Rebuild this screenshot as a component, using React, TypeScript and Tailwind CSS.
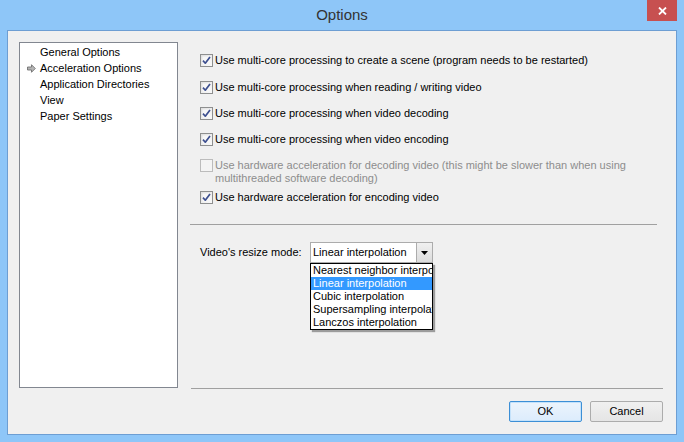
import React from "react";

const treeItems = [
  "General Options",
  "Acceleration Options",
  "Application Directories",
  "View",
  "Paper Settings",
];

const resizeModes = [
  "Nearest neighbor interpolation",
  "Linear interpolation",
  "Cubic interpolation",
  "Supersampling interpolation",
  "Lanczos interpolation",
];

function CheckBox({ checked, disabled }: { checked?: boolean; disabled?: boolean }) {
  return (
    <svg width="13" height="13" viewBox="0 0 13 13" className="shrink-0">
      <defs>
        <linearGradient id="cbg" x1="0" y1="0" x2="1" y2="1">
          <stop offset="0" stopColor="#dedede" />
          <stop offset="1" stopColor="#fbfbfb" />
        </linearGradient>
      </defs>
      <rect
        x="0.5"
        y="0.5"
        width="12"
        height="12"
        fill={disabled ? "#f4f4f4" : "url(#cbg)"}
        stroke={disabled ? "#bcbcbc" : "#8e8f8f"}
      />
      {!disabled && <rect x="2.5" y="2.5" width="8" height="8" fill="#f7f7f7" />}
      {checked && (
        <path
          d="M3 6.6 L5.3 9.2 L10 3"
          fill="none"
          stroke="#3d4f8f"
          strokeWidth="1.7"
          strokeLinejoin="round"
        />
      )}
    </svg>
  );
}

function Option({
  checked,
  disabled,
  className,
  children,
}: {
  checked?: boolean;
  disabled?: boolean;
  className?: string;
  children: React.ReactNode;
}) {
  return (
    <div className={`flex items-start gap-[2px] ${className ?? ""}`}>
      <CheckBox checked={checked} disabled={disabled} />
      <span className={`leading-[13px] ${disabled ? "text-[#8d8d8d]" : "text-black"}`}>
        {children}
      </span>
    </div>
  );
}

export default function App() {
  return (
    <div className="w-[684px] h-[442px] bg-[#8ec6f8] px-[7px] pb-[7px] flex flex-col font-['Liberation_Sans',Arial,sans-serif] text-[11px] select-none">
      {/* Title bar */}
      <div className="h-[30px] grid grid-cols-[1fr_auto_1fr] items-start">
        <div />
        <div className="pt-[6px] text-[15px] leading-[18px] text-[#333]">Options</div>
        <div className="justify-self-end w-[30px] h-[21px] bg-[#c75050] flex items-center justify-center">
          <svg width="9" height="8" viewBox="0 0 9 8">
            <path d="M1 0.5 L8 7.5 M8 0.5 L1 7.5" stroke="#fff" strokeWidth="1.8" />
          </svg>
        </div>
      </div>

      {/* Client area */}
      <div className="h-[405px] border border-[#6d9ed3] bg-[#f0f0f0] flex pt-[11px] pl-[11px] pr-[13px] pb-[12px]">
        {/* Tree */}
        <div className="w-[159px] h-[346px] shrink-0 bg-white border border-[#828790] pt-[1px]">
          {treeItems.map((item, i) => (
            <div key={item} className="h-[16px] flex items-center">
              <div className="w-[20px] flex justify-end pr-[4px]">
                {i === 1 && (
                  <svg width="9" height="9" viewBox="0 0 9 9">
                    <path
                      d="M0.5 3 H4.5 V0.7 L8.3 4.5 L4.5 8.3 V6 H0.5 Z"
                      fill="#b4b4b4"
                      stroke="#666"
                      strokeWidth="0.8"
                      strokeLinejoin="round"
                    />
                  </svg>
                )}
              </div>
              <span className="text-black">{item}</span>
            </div>
          ))}
        </div>

        {/* Settings */}
        <div className="ml-[13px] flex-1 flex flex-col">
          <div className="pl-[9px] pt-[12px] flex flex-col">
            <Option checked>Use multi-core processing to create a scene (program needs to be restarted)</Option>
            <Option checked className="mt-[14px]">Use multi-core processing when reading / writing video</Option>
            <Option checked className="mt-[13px]">Use multi-core processing when video decoding</Option>
            <Option checked className="mt-[13px]">Use multi-core processing when video encoding</Option>
            <Option disabled className="mt-[13px]">
              Use hardware acceleration for decoding video (this might be slower than when using
              <br />
              multithreaded software decoding)
            </Option>
            <Option checked className="mt-[6px]">Use hardware acceleration for encoding video</Option>
          </div>

          <div className="mt-[20px] -ml-px mr-[6px] h-px bg-[#a0a0a0]" />

          <div className="mt-[17px] pl-[9px] flex items-center">
            <span className="w-[110px] text-black">Video's resize mode:</span>
            <div className="relative w-[123px] h-[21px] border border-[#acacac] bg-white flex">
              <div className="flex-1 pl-[2px] flex items-center text-black whitespace-nowrap overflow-hidden">
                Linear interpolation
              </div>
              <div className="w-[16px] border-l border-[#acacac] bg-gradient-to-b from-[#f0f0f0] to-[#dcdcdc] flex items-center justify-center">
                <svg width="7" height="4" viewBox="0 0 7 4">
                  <path d="M0 0 H7 L3.5 4 Z" fill="#000" />
                </svg>
              </div>

              {/* Dropdown list */}
              <div className="absolute left-[-1px] top-[20px] w-[123px] border border-black bg-white shadow-[2px_2px_1px_rgba(0,0,0,0.35)]">
                {resizeModes.map((mode, i) => (
                  <div
                    key={mode}
                    className={`h-[13px] leading-[13px] pl-[2px] whitespace-nowrap overflow-hidden ${
                      i === 1 ? "bg-[#3399ff] text-white" : "text-black"
                    }`}
                  >
                    {mode}
                  </div>
                ))}
              </div>
            </div>
          </div>

          <div className="flex-1" />
          <div className="h-px bg-[#a0a0a0]" />
          <div className="mt-[12px] flex justify-end gap-[8px]">
            <button className="w-[73px] h-[21px] rounded-[2px] border border-[#3c8fd6] bg-gradient-to-b from-[#ecf4fc] to-[#dcecfc] shadow-[inset_0_0_0_1px_#c4e2fb] text-black text-[11px]">
              OK
            </button>
            <button className="w-[73px] h-[21px] rounded-[2px] border border-[#acacac] bg-gradient-to-b from-[#f0f0f0] to-[#e5e5e5] text-black text-[11px]">
              Cancel
            </button>
          </div>
        </div>
      </div>
    </div>
  );
}
